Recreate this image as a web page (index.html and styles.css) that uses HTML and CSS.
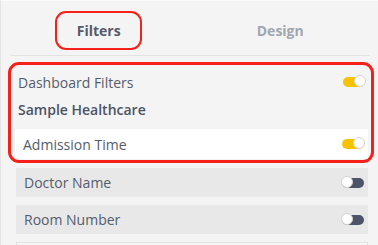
FILE: index.html
```html
<!DOCTYPE html>
<html lang="en">
<head>
<meta charset="utf-8">
<title>Filters panel</title>
<link rel="stylesheet" href="styles.css">
</head>
<body>
<div class="panel">
  <div class="tabs">
    <div class="tab"><span class="tab-label active">Filters</span></div>
    <div class="tab"><span class="tab-label">Design</span></div>
  </div>
  <div class="highlight">
    <div class="section-head">
      <span class="section-title">Dashboard Filters</span>
      <span class="toggle on"><span class="knob"></span></span>
    </div>
    <div class="source">Sample Healthcare</div>
    <div class="row selected">
      <span class="row-label">Admission Time</span>
      <span class="toggle on"><span class="knob"></span></span>
    </div>
  </div>
  <div class="rows">
    <div class="row">
      <span class="row-label">Doctor Name</span>
      <span class="toggle off"><span class="knob"></span></span>
    </div>
    <div class="row">
      <span class="row-label">Room Number</span>
      <span class="toggle off"><span class="knob"></span></span>
    </div>
    <div class="row outline"></div>
  </div>
</div>
</body>
</html>
```
FILE: styles.css
```css
html, body {
  margin: 0;
  padding: 0;
  height: 100%;
  overflow: hidden;
}
body {
  background: #f4f4f4;
  font-family: "Open Sans", "Liberation Sans", sans-serif;
  font-size: 14px;
  color: #555c6b;
}
.panel {
  border-left: 1px solid #e4e4e4;
  border-top: 1px solid #fbfbfb;
  height: 100%;
  box-sizing: border-box;
}
.tabs {
  display: flex;
  margin: 0 8px 0 10px;
  padding-top: 10px;
  padding-bottom: 5px;
  border-bottom: 1px solid #e3e3e3;
}
.tab {
  flex: 1;
  display: flex;
  justify-content: center;
}
.tab-label {
  display: inline-flex;
  align-items: center;
  justify-content: center;
  box-sizing: border-box;
  width: 87px;
  height: 39px;
  border: 2.5px solid transparent;
  border-radius: 11px;
  font-weight: 700;
  color: #a1a6b0;
}
.tab-label.active {
  border-color: #f5201a;
  color: #545b6a;
  margin-left: -4px;
}
.highlight {
  margin: 6px 4px 0 7px;
  padding: 0 3px 1px 4px;
  border: 3px solid #f5201a;
  border-radius: 11px;
}
.section-head {
  display: flex;
  align-items: center;
  justify-content: space-between;
  height: 34px;
  padding: 0 3px 0 3px;
}
.section-title {
  color: #555c6b;
}
.source {
  height: 22px;
  line-height: 22px;
  padding-left: 3px;
  font-weight: 600;
  color: #4c5363;
}
.row {
  display: flex;
  align-items: center;
  justify-content: space-between;
  height: 29px;
  padding: 0 4px 0 8px;
  background: #e8e8e8;
  box-sizing: border-box;
}
.row.selected {
  background: #ffffff;
  margin-top: 8px;
  height: 30px;
}
.row.outline {
  background: #f6f6f6;
  border: 1px solid #e2e2e2;
}
.rows {
  display: flex;
  flex-direction: column;
  gap: 8px;
  margin: 5px 10px 0 15px;
}
.row-label {
  color: #555c6b;
}
.toggle {
  position: relative;
  width: 22px;
  height: 10px;
  border-radius: 5px;
  flex: none;
}
.toggle.on {
  background: #f7c300;
}
.toggle.off {
  background: #4c5467;
}
.knob {
  position: absolute;
  top: -2px;
  width: 12px;
  height: 12px;
  border-radius: 50%;
  background: #ffffff;
  border: 1px solid #d4d4d4;
  box-sizing: border-box;
}
.toggle.on .knob {
  right: -1px;
}
.toggle.off .knob {
  left: -1px;
}
```
